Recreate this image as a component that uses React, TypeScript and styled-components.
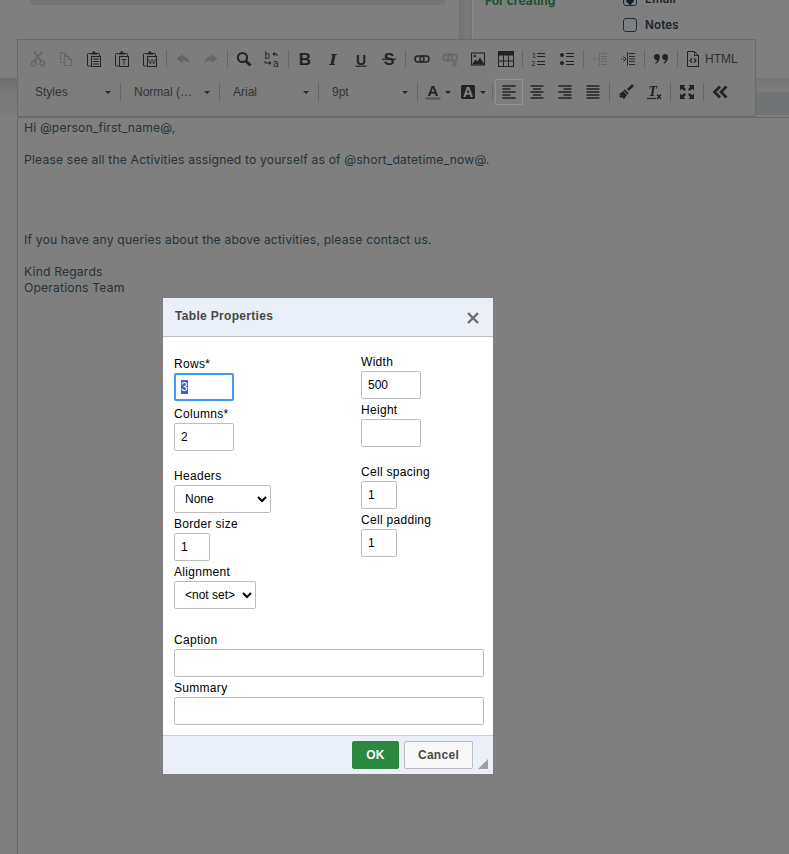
import React, { useEffect, useRef } from "react";
import styled, { createGlobalStyle } from "styled-components";

const Global = createGlobalStyle`
  html, body { margin: 0; padding: 0; background: #7f7f7f; }
  body { font-family: "Liberation Sans", Arial, sans-serif; overflow: hidden; }
  input::selection { background: #3d5ed6; color: #fff; }
`;

const Page = styled.div`
  position: relative;
  width: 789px;
  height: 854px;
  overflow: hidden;
  display: flex;
  flex-direction: column;
  background: #7f7f7f;
`;

const TopStrip = styled.div`
  height: 39px;
  display: flex;
  flex: none;
`;
const LeftPanel = styled.div`
  width: 415px;
  height: 5px;
  margin-left: 30px;
  background: #767676;
  border-radius: 0 0 3px 3px;
`;
const ScrollStrip = styled.div`
  width: 13px;
  margin-left: 14px;
  background: linear-gradient(90deg, #727272, #7a7a7a 60%, #757575);
  border-right: 1px solid #8a8a8a;
`;
const CreatingLabel = styled.div`
  margin: -6px 0 0 12px;
  width: 138px;
  font: 700 12px/14px "Inter", sans-serif;
  color: #1a5030;
`;
const Checks = styled.div`
  display: flex;
  flex-direction: column;
  gap: 12px;
  margin-top: -8px;
`;
const CheckRow = styled.div`
  display: flex;
  align-items: center;
  gap: 8px;
  height: 14px;
  font: 600 11.5px/14px "Inter", sans-serif;
  letter-spacing: 0.2px;
  color: #16262c;
`;
const CheckBox = styled.span<{ $on?: boolean }>`
  width: 12px;
  height: 12px;
  border: 1px solid #14303c;
  border-radius: 3px;
  display: flex;
  align-items: center;
  justify-content: center;
  &::after {
    content: "";
    display: ${(p) => (p.$on ? "block" : "none")};
    width: 6px;
    height: 6px;
    margin-top: 3px;
    background: #14202a;
    transform: rotate(45deg);
  }
`;

const ToolbarBand = styled.div`
  flex: none;
  height: 78px;
  background:
    linear-gradient(180deg, #7f7f7f 39px, #6f6f6f 39px, #787878 52px, #7d7d7d 78px) left / 17px 100% no-repeat,
    linear-gradient(180deg, #7f7f7f 39px, #767676 39px, #7d7d7d 52px, #717474 54px, #717474 76px, #7f7f7f 76px) right / 33px 100% no-repeat;
`;
const Toolbar = styled.div`
  box-sizing: border-box;
  width: 739px;
  height: 78px;
  margin-left: 17px;
  padding-top: 3px;
  display: flex;
  flex-direction: column;
  gap: 1px;
  background: #7d7d7d;
  border: 1px solid #686b70;
`;
const Row = styled.div`
  display: flex;
  align-items: center;
  height: 32px;
  padding-left: 6px;
`;
const Sep = styled.span`
  flex: none;
  width: 1px;
  height: 18px;
  margin: 0 2px;
  background: #676767;
`;
const Btn = styled.span<{ $muted?: boolean; $active?: boolean }>`
  flex: none;
  box-sizing: border-box;
  width: 28px;
  height: 26px;
  display: flex;
  align-items: center;
  justify-content: center;
  color: ${(p) => (p.$muted ? "#666666" : "#232323")};
  border: 1px solid ${(p) => (p.$active ? "#929292" : "transparent")};
`;
const SourceBtn = styled.span`
  flex: none;
  display: flex;
  align-items: center;
  gap: 4px;
  padding-left: 5px;
  color: #232323;
  font-size: 12px;
`;
const SourceText = styled.span`
  color: #2e2e2e;
`;
const Combo = styled.span`
  flex: none;
  box-sizing: border-box;
  width: 94px;
  padding: 0 7px 0 11px;
  display: flex;
  align-items: center;
  justify-content: space-between;
  font-size: 12px;
  color: #333333;
`;
const Caret = styled.span`
  flex: none;
  width: 0;
  height: 0;
  border-left: 3px solid transparent;
  border-right: 3px solid transparent;
  border-top: 3px solid #262626;
`;
const ColorBtn = styled.span`
  flex: none;
  box-sizing: border-box;
  width: 35px;
  padding-left: 5px;
  display: flex;
  align-items: center;
  gap: 4px;
  color: #232323;
`;

const Editor = styled.div`
  flex: 1;
  margin-left: 17px;
  padding: 2px 0 0 6px;
  border-top: 1px solid #a8591a;
  border-left: 1px solid #8f5a2c;
  border-top-left-radius: 3px;
  font: 400 12.2px/16px "Inter", "Open Sans", sans-serif;
  letter-spacing: 0.15px;
  color: #263238;
`;
const Line = styled.div`
  height: 16px;
  white-space: nowrap;
`;

const Dialog = styled.div`
  position: absolute;
  left: 163px;
  top: 298px;
  width: 330px;
  height: 476px;
  background: #fff;
  display: flex;
  flex-direction: column;
  font-size: 12px;
  color: #000;
`;
const DialogHead = styled.div`
  box-sizing: border-box;
  flex: none;
  height: 39px;
  padding: 0 14px 2px 12px;
  display: flex;
  align-items: center;
  justify-content: space-between;
  background: #ebeff8;
  border-bottom: 1px solid #bcc0c8;
`;
const DialogTitle = styled.div`
  font: 700 12px/16px "Liberation Sans", sans-serif;
  letter-spacing: 0.32px;
  color: #484848;
`;
const CloseIcon = styled.svg`
  width: 12px;
  height: 12px;
  margin-top: 3px;
`;
const DialogBody = styled.div`
  flex: 1;
  padding: 0 9px 0 11px;
`;
const Columns = styled.div`
  display: flex;
  height: 272px;
`;
const Col = styled.div<{ $w: number; $top: number }>`
  width: ${(p) => p.$w}px;
  padding-top: ${(p) => p.$top}px;
  display: flex;
  flex-direction: column;
  gap: 14px;
`;
const Group = styled.div`
  display: flex;
  flex-direction: column;
`;
const Field = styled.label<{ $after?: number }>`
  display: flex;
  flex-direction: column;
  align-items: flex-start;
  margin-bottom: ${(p) => p.$after ?? 0}px;
`;
const FieldName = styled.span`
  height: 20px;
  line-height: 22px;
  font-size: 12px;
  letter-spacing: 0.3px;
`;
const TextInput = styled.input<{ $w: number; $focus?: boolean }>`
  box-sizing: border-box;
  width: ${(p) => p.$w}px;
  height: 28px;
  margin: 0;
  padding: 0 0 0 ${(p) => (p.$focus ? 5 : 6)}px;
  border: ${(p) => (p.$focus ? "2px solid #3f9bfb" : "1px solid #bcbcbc")};
  border-radius: 2px;
  outline: none;
  background: #fff;
  font: 12px "Liberation Sans", sans-serif;
  color: #000;
`;
const Dropdown = styled.select<{ $w: number }>`
  box-sizing: border-box;
  width: ${(p) => p.$w}px;
  height: 28px;
  margin: 0;
  padding: 0 0 0 6px;
  border: 1px solid #bcbcbc;
  border-radius: 2px;
  background: #fff;
  font: 12px "Liberation Sans", sans-serif;
  color: #000;
`;
const WideGroup = styled.div`
  margin-top: 20px;
`;
const Footer = styled.div`
  box-sizing: border-box;
  position: relative;
  flex: none;
  height: 39px;
  padding: 5px 20px 0 0;
  display: flex;
  justify-content: flex-end;
  gap: 5px;
  background: #ebeff8;
  border-top: 1px solid #d1d1d1;
`;
const Button = styled.button<{ $primary?: boolean }>`
  box-sizing: border-box;
  width: ${(p) => (p.$primary ? 47 : 69)}px;
  height: 28px;
  padding: 0;
  border: 1px solid ${(p) => (p.$primary ? "#2b883f" : "#bcbcbc")};
  border-radius: 2px;
  background: ${(p) => (p.$primary ? "#2b883f" : "#f8f8f8")};
  font: 700 12px "Liberation Sans", sans-serif;
  letter-spacing: 0.3px;
  color: ${(p) => (p.$primary ? "#ffffff" : "#484848")};
`;
const Grip = styled.span`
  position: absolute;
  right: 5px;
  bottom: 5px;
  width: 0;
  height: 0;
  border-left: 10px solid transparent;
  border-bottom: 10px solid #9c9fa6;
`;

const Svg = ({ children, w = 16 }: { children: React.ReactNode; w?: number }) => (
  <svg width={w} height="16" viewBox={`0 0 ${w} 16`} fill="none" stroke="currentColor" strokeWidth="1">
    {children}
  </svg>
);

const glyph = { stroke: "none", fill: "currentColor" } as const;

const Cut = () => (
  <Svg>
    <path d="M4.6 10.2 11.8.8M11.4 10.2 4.2.8" strokeWidth="1.7" />
    <circle cx="3.6" cy="12.6" r="2.3" strokeWidth="1.4" />
    <circle cx="12.4" cy="12.6" r="2.3" strokeWidth="1.4" />
  </Svg>
);
const Copy = () => (
  <Svg>
    <path d="M6 11.5H2.5v-10h4l2.5 3v1" />
    <path d="M6.5 1.5v3H9" />
    <path d="M6.5 5.5h4l3 3v6h-7z" />
    <path d="M10.5 5.5v3h3" />
  </Svg>
);
const Clipboard = ({ children }: { children: React.ReactNode }) => (
  <Svg>
    <path d="M4.5 15H2.5a1 1 0 0 1-1-1V3.5a1 1 0 0 1 1-1H4" strokeWidth="1" />
    <path d="M11 2.5h1.5a1 1 0 0 1 1 1V5" strokeWidth="1" />
    <path d="M4.5 3.6V2h1.6a1.7 1.7 0 0 1 3.4 0H11v1.6z" {...glyph} />
    <rect x="5.5" y="5.5" width="9" height="10" strokeWidth="1" />
    {children}
  </Svg>
);
const Paste = () => (
  <Clipboard>
    <path d="M7 8h6M7 10.5h6M7 13h6" strokeWidth="1" />
  </Clipboard>
);
const PasteText = () => (
  <Clipboard>
    <text x="10" y="13.6" textAnchor="middle" fontSize="9" fontFamily="Liberation Sans" {...glyph}>T</text>
  </Clipboard>
);
const PasteWord = () => (
  <Clipboard>
    <text x="10" y="13.2" textAnchor="middle" fontSize="8" fontFamily="Liberation Sans" {...glyph}>W</text>
  </Clipboard>
);
const Undo = () => (
  <Svg>
    <path d="M7.5 3 1.5 7.7l6 4.6V9.5c3-.3 5.2.6 7 3-.3-4-3-7-7-7.2z" {...glyph} />
  </Svg>
);
const Redo = () => (
  <Svg>
    <path d="M8.5 3l6 4.7-6 4.6V9.5c-3-.3-5.2.6-7 3 .3-4 3-7 7-7.2z" {...glyph} />
  </Svg>
);
const Find = () => (
  <Svg>
    <circle cx="6.5" cy="6.5" r="4.6" strokeWidth="2" />
    <path d="M10 10l4.5 4.5" strokeWidth="2.8" />
  </Svg>
);
const Replace = () => (
  <Svg>
    <text x="0.5" y="7.6" fontSize="10" fontFamily="Liberation Sans" {...glyph}>b</text>
    <text x="9" y="15.6" fontSize="10" fontFamily="Liberation Sans" {...glyph}>a</text>
    <path d="M9 3h4v2M1 10v2h4" />
    <path d="M11 1 8.5 3 11 5zM5 10l2.5 2L5 14z" {...glyph} />
  </Svg>
);
const Letter = ({ ch, family, weight = 700, italic, size = 17 }: { ch: string; family: string; weight?: number; italic?: boolean; size?: number }) => (
  <text x="8" y="14" textAnchor="middle" fontSize={size} fontFamily={family} fontWeight={weight} fontStyle={italic ? "italic" : "normal"} {...glyph}>
    {ch}
  </text>
);
const Bold = () => (
  <Svg>
    <Letter ch="B" family="Liberation Sans" />
  </Svg>
);
const Italic = () => (
  <Svg>
    <Letter ch="I" family="DejaVu Serif" italic size={15} />
  </Svg>
);
const Underline = () => (
  <Svg>
    <Letter ch="U" family="Liberation Sans" size={14} />
    <path d="M2.5 15.5h11" strokeWidth="1.2" transform="translate(0 -0.3)" />
  </Svg>
);
const Strike = () => (
  <Svg>
    <Letter ch="S" family="Liberation Sans" size={16} />
    <path d="M1 8.2h14" strokeWidth="1.2" />
  </Svg>
);
const Link = () => (
  <Svg>
    <rect x="1" y="5" width="9" height="6" rx="3" strokeWidth="1.4" />
    <rect x="6" y="5" width="9" height="6" rx="3" strokeWidth="1.4" />
  </Svg>
);
const Unlink = () => (
  <Svg>
    <rect x="1" y="3.5" width="9" height="6" rx="3" strokeWidth="1.4" />
    <rect x="6" y="3.5" width="9" height="6" rx="3" strokeWidth="1.4" />
    <path d="M10.5 10.5l4 4.5M14.5 10.5l-4 4.5" strokeWidth="1.4" />
  </Svg>
);
const Picture = () => (
  <Svg>
    <rect x="1.5" y="2" width="13" height="12" strokeWidth="1.1" />
    <circle cx="4.8" cy="5" r="1.2" {...glyph} />
    <path d="M2 13.5 5.5 8.5l2 2 2.5-4 4.5 7z" {...glyph} />
  </Svg>
);
const TableIcon = () => (
  <Svg>
    <rect x="0.5" y="0.5" width="15" height="4" {...glyph} />
    <rect x="0.5" y="0.5" width="15" height="15" />
    <path d="M5.5 4v11M10.5 4v11M1 10h14" />
  </Svg>
);
const Numbered = () => (
  <Svg>
    <text x="1" y="7" fontSize="7" fontFamily="Liberation Sans" {...glyph}>1</text>
    <text x="0.5" y="15" fontSize="7" fontFamily="Liberation Sans" {...glyph}>2</text>
    <path d="M6 2.5h8M6 5.5h8M6 10.5h8M6 13.5h8" />
  </Svg>
);
const Bullets = () => (
  <Svg>
    <circle cx="3" cy="4" r="2" {...glyph} />
    <circle cx="3" cy="12" r="2" {...glyph} />
    <path d="M7 2.5h8M7 5.5h8M7 10.5h8M7 13.5h8" />
  </Svg>
);
const Outdent = () => (
  <Svg>
    <path d="M7.5 1v14M9 2.5h6M9 5.5h6M9 8h6M9 10.5h6M9 13.5h6" strokeWidth="0.9" />
    <path d="M6.5 8h-1M4 8H3" />
    <path d="M3.5 5.5 1 8l2.5 2.5" />
  </Svg>
);
const Indent = () => (
  <Svg>
    <path d="M7.5 1v14M9 2.5h6M9 5.5h6M9 8h6M9 10.5h6M9 13.5h6" strokeWidth="0.9" />
    <path d="M1 8h1M3 8h1" />
    <path d="M3.5 5.5 6 8l-2.5 2.5" />
  </Svg>
);
const Quote = () => (
  <Svg>
    <path
      d="M3.8 3a3 3 0 0 1 3 3.2c0 3-1.9 5.4-4 6.6l-.6-.8c1-.8 1.8-1.8 2-3A3 3 0 1 1 3.8 3z"
      {...glyph}
    />
    <path
      d="M12 3a3 3 0 0 1 3 3.2c0 3-1.9 5.4-4 6.6l-.6-.8c1-.8 1.8-1.8 2-3A3 3 0 1 1 12 3z"
      {...glyph}
    />
  </Svg>
);
const Source = () => (
  <Svg>
    <path d="M2.5.5h7l4 4v11h-11z" />
    <path d="M9.5.5v4h4" />
    <path d="M7 7.5 5 9.5l2 2M9 7.5l2 2-2 2" strokeWidth="1.2" />
  </Svg>
);
const FontColor = () => (
  <Svg>
    <text x="8" y="12" textAnchor="middle" fontSize="15" fontWeight="700" fontFamily="Liberation Sans" {...glyph}>A</text>
    <rect x="0.5" y="13.5" width="15" height="2" fill="#565656" stroke="none" />
  </Svg>
);
const BgColor = () => (
  <Svg>
    <rect x="1" y="1" width="14" height="14" rx="1.5" {...glyph} />
    <text x="8" y="13" textAnchor="middle" fontSize="14" fontWeight="700" fontFamily="Liberation Sans" stroke="none" fill="#8a8a8a">A</text>
  </Svg>
);
const AlignIcon = ({ kind }: { kind: "left" | "center" | "right" | "justify" }) => {
  const short =
    kind === "left" ? "M1.5 5.5h8M1.5 11.5h8" : kind === "center" ? "M4 5.5h8M4 11.5h8" : kind === "right" ? "M6.5 5.5h8M6.5 11.5h8" : "M1.5 5.5h13M1.5 11.5h13";
  return (
    <Svg>
      <path d="M1.5 2.5h13M1.5 8.5h13M1.5 14.5h13" strokeWidth="1.6" transform="translate(0 -0.5)" />
      <path d={short} strokeWidth="1.6" transform="translate(0 -0.5)" />
    </Svg>
  );
};
const Brush = () => (
  <Svg>
    <path d="M15 1 10 6" strokeWidth="2.6" />
    <path d="M6.8 5.2l4 4-1.2 1.4-4.2-4.2z" {...glyph} />
    <path d="M5 7l4 4-3 4.2-1.4-1 .6-1.6-1.8 1.4-2.2-1.6 1.6-1.4-1.4.2-.4-.8z" {...glyph} />
  </Svg>
);
const ClearFormat = () => (
  <Svg>
    <text x="6.5" y="11.5" textAnchor="middle" fontSize="14" fontWeight="700" fontStyle="italic" fontFamily="Liberation Serif" {...glyph}>T</text>
    <path d="M1 14.5h9" strokeWidth="1.2" />
    <path d="M11 10.5l4 4.5M15 10.5l-4 4.5" strokeWidth="1.3" />
  </Svg>
);
const Maximize = () => (
  <Svg>
    <path d="M1 1h5.5L4.7 2.8 7 5.2 5.2 7 2.8 4.7 1 6.5z" {...glyph} />
    <path d="M15 1H9.5l1.8 1.8L9 5.2 10.8 7l2.4-2.3L15 6.5z" {...glyph} />
    <path d="M1 15h5.5l-1.8-1.8L7 10.8 5.2 9l-2.4 2.3L1 9.5z" {...glyph} />
    <path d="M15 15H9.5l1.8-1.8L9 10.8 10.8 9l2.4 2.3L15 9.5z" {...glyph} />
  </Svg>
);
const Collapse = () => (
  <Svg>
    <path d="M8 2.5 2.5 8 8 13.5M14.5 2.5 9 8l5.5 5.5" strokeWidth="2.8" />
  </Svg>
);

const Rows = () => {
  const ref = useRef<HTMLInputElement>(null);
  useEffect(() => {
    ref.current?.focus();
    ref.current?.select();
  }, []);
  return (
    <Field $after={2}>
      <FieldName>Rows*</FieldName>
      <TextInput ref={ref} $w={60} $focus defaultValue="3" />
    </Field>
  );
};

const InputField = ({ label, w, value = "" }: { label: string; w: number; value?: string }) => (
  <Field>
    <FieldName>{label}</FieldName>
    <TextInput $w={w} defaultValue={value} />
  </Field>
);

export default function App() {
  return (
    <Page>
      <Global />
      <TopStrip>
        <LeftPanel />
        <ScrollStrip />
        <CreatingLabel>For creating</CreatingLabel>
        <Checks>
          <CheckRow>
            <CheckBox $on />
            Email
          </CheckRow>
          <CheckRow>
            <CheckBox />
            Notes
          </CheckRow>
        </Checks>
      </TopStrip>

      <ToolbarBand>
        <Toolbar>
          <Row>
            <Btn $muted><Cut /></Btn>
            <Btn $muted><Copy /></Btn>
            <Btn><Paste /></Btn>
            <Btn><PasteText /></Btn>
            <Btn><PasteWord /></Btn>
            <Sep />
            <Btn $muted><Undo /></Btn>
            <Btn $muted><Redo /></Btn>
            <Sep />
            <Btn><Find /></Btn>
            <Btn><Replace /></Btn>
            <Sep />
            <Btn><Bold /></Btn>
            <Btn><Italic /></Btn>
            <Btn><Underline /></Btn>
            <Btn><Strike /></Btn>
            <Sep />
            <Btn><Link /></Btn>
            <Btn $muted><Unlink /></Btn>
            <Btn><Picture /></Btn>
            <Btn><TableIcon /></Btn>
            <Sep />
            <Btn><Numbered /></Btn>
            <Btn><Bullets /></Btn>
            <Sep />
            <Btn $muted><Outdent /></Btn>
            <Btn><Indent /></Btn>
            <Sep />
            <Btn><Quote /></Btn>
            <Sep />
            <SourceBtn>
              <Source />
              <SourceText>HTML</SourceText>
            </SourceBtn>
          </Row>
          <Row>
            <Combo>Styles<Caret /></Combo>
            <Sep />
            <Combo>Normal (…<Caret /></Combo>
            <Sep />
            <Combo>Arial<Caret /></Combo>
            <Sep />
            <Combo>9pt<Caret /></Combo>
            <Sep />
            <ColorBtn><FontColor /><Caret /></ColorBtn>
            <ColorBtn><BgColor /><Caret /></ColorBtn>
            <Sep />
            <Btn $active><AlignIcon kind="left" /></Btn>
            <Btn><AlignIcon kind="center" /></Btn>
            <Btn><AlignIcon kind="right" /></Btn>
            <Btn><AlignIcon kind="justify" /></Btn>
            <Sep />
            <Btn><Brush /></Btn>
            <Btn><ClearFormat /></Btn>
            <Sep />
            <Btn><Maximize /></Btn>
            <Sep />
            <Btn><Collapse /></Btn>
          </Row>
        </Toolbar>
      </ToolbarBand>

      <Editor>
        <Line>Hi @person_first_name@,</Line>
        <Line />
        <Line>Please see all the Activities assigned to yourself as of @short_datetime_now@.</Line>
        <Line />
        <Line />
        <Line />
        <Line />
        <Line>If you have any queries about the above activities, please contact us.</Line>
        <Line />
        <Line>Kind Regards</Line>
        <Line>Operations Team</Line>
      </Editor>

      <Dialog>
        <DialogHead>
          <DialogTitle>Table Properties</DialogTitle>
          <CloseIcon viewBox="0 0 12 12">
            <path d="M1 1l10 10M11 1 1 11" stroke="#6b6b6b" strokeWidth="2.4" fill="none" />
          </CloseIcon>
        </DialogHead>
        <DialogBody>
          <Columns>
            <Col $w={187} $top={16}>
              <Group>
                <Rows />
                <InputField label="Columns*" w={60} value="2" />
              </Group>
              <Group>
                <Field>
                  <FieldName>Headers</FieldName>
                  <Dropdown $w={97} defaultValue="None">
                    <option>None</option>
                    <option>First Row</option>
                    <option>First Column</option>
                    <option>Both</option>
                  </Dropdown>
                </Field>
                <InputField label="Border size" w={36} value="1" />
                <Field>
                  <FieldName>Alignment</FieldName>
                  <Dropdown $w={82} defaultValue="<not set>">
                    <option>{"<not set>"}</option>
                    <option>Left</option>
                    <option>Center</option>
                    <option>Right</option>
                  </Dropdown>
                </Field>
              </Group>
            </Col>
            <Col $w={123} $top={14}>
              <Group>
                <InputField label="Width" w={60} value="500" />
                <InputField label="Height" w={60} />
              </Group>
              <Group>
                <InputField label="Cell spacing" w={36} value="1" />
                <InputField label="Cell padding" w={36} value="1" />
              </Group>
            </Col>
          </Columns>
          <WideGroup>
            <InputField label="Caption" w={310} />
            <InputField label="Summary" w={310} />
          </WideGroup>
        </DialogBody>
        <Footer>
          <Button $primary>OK</Button>
          <Button>Cancel</Button>
          <Grip />
        </Footer>
      </Dialog>
    </Page>
  );
}
